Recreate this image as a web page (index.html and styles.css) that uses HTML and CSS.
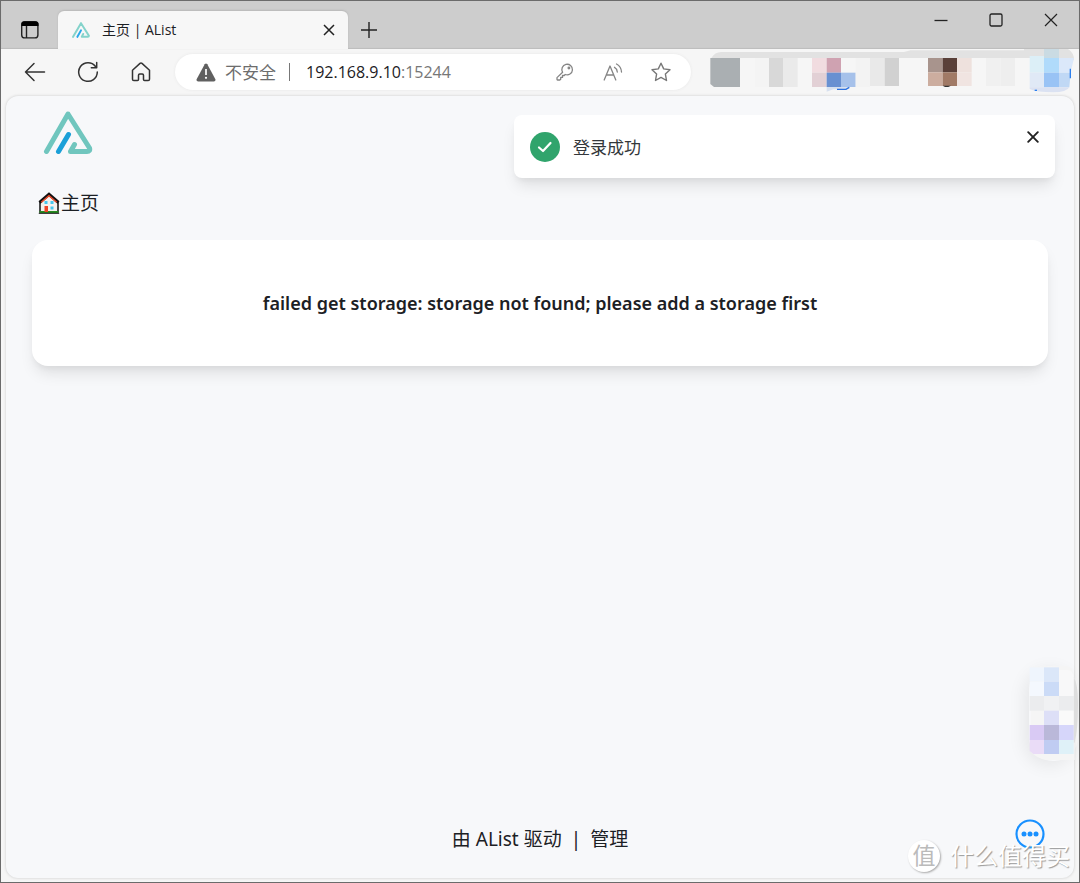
FILE: index.html
```html
<!DOCTYPE html>
<html lang="zh-CN">
<head>
<meta charset="utf-8">
<meta name="viewport" content="width=device-width, initial-scale=1">
<title>主页 | AList</title>
<link rel="stylesheet" href="styles.css">
</head>
<body class="window">
<header class="titlebar">
  <button class="icon-button tab-actions" type="button" aria-label="标签操作菜单">
    <svg width="20" height="20" viewBox="0 0 20 20" fill="none" stroke="#222" stroke-width="1.4"><rect x="1.7" y="1.7" width="16.2" height="16.2" rx="3"/><path d="M1.5 6V4Q1.5 1.5 4 1.5H16Q18.500 1.500 18.500 4V6Z" fill="#000" stroke="none"/><path d="M6.500 6V18"/></svg>
  </button>
  <div class="tab">
    <svg class="favicon" viewBox="0 0 50 44" fill="none" stroke-linecap="round" stroke-linejoin="round" stroke-width="5.500"><path d="M3 41L25 3L47 38Q47 41 44 41H27L31 33" stroke="#84d3cb"/><path d="M15 41L25 23" stroke="#2ba9ea"/></svg>
    <span class="tab-title">主页 | AList</span>
    <button class="icon-button tab-close" type="button" aria-label="关闭标签页">
      <svg width="12" height="12" viewBox="0 0 12 12" stroke="#222" stroke-width="1.500"><path d="M1 1L11 11M11 1L1 11"/></svg>
    </button>
  </div>
  <button class="icon-button new-tab" type="button" aria-label="新建标签页">
    <svg width="18" height="18" viewBox="0 0 18 18" stroke="#222" stroke-width="1.400"><path d="M9 1V17M1 9H17"/></svg>
  </button>
  <div class="window-controls">
    <button class="icon-button" type="button" aria-label="最小化"><svg width="14" height="14" viewBox="0 0 14 14" stroke="#222" stroke-width="1.300"><path d="M0.500 7.500H13.500"/></svg></button>
    <button class="icon-button" type="button" aria-label="最大化"><svg width="14" height="14" viewBox="0 0 14 14" fill="none" stroke="#222" stroke-width="1.300"><rect x="1" y="1" width="12" height="12" rx="1.500"/></svg></button>
    <button class="icon-button" type="button" aria-label="关闭"><svg width="14" height="14" viewBox="0 0 14 14" stroke="#222" stroke-width="1.200"><path d="M1 1L13 13M13 1L1 13"/></svg></button>
  </div>
</header>

<nav class="toolbar">
  <div class="nav-buttons">
    <button class="icon-button" type="button" aria-label="返回"><svg width="22" height="20" viewBox="0 0 22 20" fill="none" stroke="#333" stroke-width="1.500" stroke-linecap="round" stroke-linejoin="round"><path d="M20.500 10H1.500M10 1.500L1.500 10L10 18.500"/></svg></button>
    <button class="icon-button" type="button" aria-label="刷新"><svg width="22" height="22" viewBox="0 0 22 22" fill="none" stroke="#333" stroke-width="1.500" stroke-linecap="round" stroke-linejoin="round"><path d="M20.300 11A9.300 9.300 0 1 1 18.500 5.500M19.700 1.500V6.800H14.300"/></svg></button>
    <button class="icon-button" type="button" aria-label="主页"><svg width="20" height="20" viewBox="0 0 20 20" fill="none" stroke="#333" stroke-width="1.500" stroke-linejoin="round"><path d="M1.500 8.200L9 1.400Q10 0.600 11 1.400L18.500 8.200V17.300Q18.500 18.600 17.200 18.600H13.500Q12.500 18.600 12.500 17.600V13.200Q12.500 12 11.300 12H8.700Q7.500 12 7.500 13.200V17.600Q7.500 18.600 6.500 18.600H2.800Q1.500 18.600 1.500 17.300Z"/></svg></button>
  </div>
  <div class="address">
    <svg width="20" height="19" viewBox="0 0 20 19"><path d="M8.700 1.200Q10 -0.300 11.300 1.200L19.400 16.200Q20 18.500 17.800 18.500H2.200Q0 18.500 0.600 16.200Z" fill="#606060"/><path d="M10 6V12" stroke="#fff" stroke-width="1.700"/><circle cx="10" cy="14.800" r="1.100" fill="#fff"/></svg>
    <span class="security">不安全</span>
    <span class="address-divider"></span>
    <span class="url" role="textbox" aria-label="地址栏" tabindex="0">192.168.9.10<span class="port">:15244</span></span>
    <div class="address-actions">
      <button class="icon-button" type="button" aria-label="密码"><svg width="18" height="18" viewBox="0 0 18 18" fill="none" stroke="#858585" stroke-width="1.300" stroke-linejoin="round"><path d="M6.600 9.300A5.300 5.300 0 1 1 9.200 11.500L8.200 12.500H6.500V14.400H4.700V16.200L3.800 17H1.500Q1 17 1 16.500V14.600Z"/><circle cx="12.900" cy="5" r="0.800" fill="#858585"/></svg></button>
      <button class="icon-button" type="button" aria-label="大声朗读"><svg width="20" height="18" viewBox="0 0 20 18" fill="none" stroke="#858585" stroke-width="1.300" stroke-linecap="round" stroke-linejoin="round"><path d="M1.200 17L7 3L12.800 17M3.200 12H10.800M11.500 4.300Q14 5.600 14.300 9M13.500 1Q18.200 3.500 18.500 9"/></svg></button>
      <button class="icon-button" type="button" aria-label="收藏"><svg width="20" height="20" viewBox="0 0 20 20" fill="none" stroke="#777" stroke-width="1.400" stroke-linejoin="round"><path d="M10 1.200L12.700 6.900L19 7.700L14.400 12.100L15.500 18.500L10 15.400L4.500 18.500L5.600 12.100L1 7.700L7.300 6.900Z"/></svg></button>
    </div>
  </div>
  <svg class="extensions" viewBox="30 147 1092 138" aria-hidden="true">
    <path d="M34 174Q44 156 64 156H612L632 151H972V147H1104Q1122 158 1122 180L1112 184L1100 174Z" fill="#e2e2e2"/>
    <path d="M31 174H120V261H42L31 252Z" fill="#aaafb2"/>
    <path d="M164 174H207V261H164Z" fill="#f4f4f4"/><path d="M207 174H249V261H207Z" fill="#d8d8d8"/><path d="M249 174H293V261H249Z" fill="#eaeaea"/>
    <path d="M336 174H380V218H336Z" fill="#f1dce0"/><path d="M380 174H423V218H380Z" fill="#cfa2b1"/><path d="M336 218H380V261H336Z" fill="#e2d0d5"/><path d="M380 218H423V261H380Z" fill="#6990d1"/><path d="M423 218H467V261H423Z" fill="#a6c1ea"/><path d="M380 261H450L440 267L400 268L380 275Z" fill="#d7e0ef"/><path d="M411 268H438L448 262" fill="none" stroke="#2d72e0" stroke-width="4"/>
    <path d="M467 174H510V261H467Z" fill="#f3f3f3"/><path d="M510 174H554V258H510Z" fill="#e9e9e9"/><path d="M554 174H597V258H554Z" fill="#d1d1d1"/>
    <path d="M684 174H728V217H684Z" fill="#a8948d"/><path d="M728 174H771V217H728Z" fill="#5a4039"/><path d="M684 217H728V258H684Z" fill="#ccad9f"/><path d="M728 217H771V258H728Z" fill="#a17a66"/><path d="M728 257H753L745 261H735Z" fill="#333"/><path d="M771 174H815V217H771Z" fill="#eee1dd"/><path d="M771 217H815V258H771Z" fill="#f0e4e1"/>
    <path d="M858 174H902V258H858Z" fill="#f0f0f0"/><path d="M902 174H945V258H902Z" fill="#eee"/>
    <path d="M989 168H1032V218H989Z" fill="#dceff7"/><path d="M1032 147H1077V174H1032Z" fill="#cadbe3"/><path d="M1032 174H1077V218H1032Z" fill="#b0dbfb"/><path d="M1077 174H1122L1112 218H1077Z" fill="#dbe8fa"/><path d="M989 218H1032V262H989Z" fill="#e0e9f6"/><path d="M1032 218H1077V262H1032Z" fill="#99c3f5"/><path d="M1077 218H1112L1108 262H1077Z" fill="#c0d8f5"/><path d="M989 262H1108Q1100 277 1060 277Q1010 277 989 267Z" fill="#dbe2f2"/><path d="M1111 206V235" stroke="#2d80ee" stroke-width="4"/><path d="M1004 271H1011" stroke="#2d80ee" stroke-width="4"/>
  </svg>
</nav>

<div class="page">
  <header class="site-header">
    <a class="logo" href="#" aria-label="AList">
      <svg width="50" height="44" viewBox="0 0 50 44" fill="none" stroke-linecap="round" stroke-linejoin="round" stroke-width="5"><path d="M3.500 40.500L25 3L46.500 37Q47.500 40.500 44 40.500H27.500L31.500 33.500" stroke="#70c6be"/><path d="M15.500 40.500L25.500 23.500" stroke="#1ba0d8"/></svg>
    </a>
  </header>
  <nav class="breadcrumb">
    <a class="crumb" href="#">
      <svg width="22" height="22" viewBox="0 0 22 22"><path d="M2 10L11 2.500L20 10V20H2Z" fill="#f4f1ee" stroke="#111" stroke-width="1.500"/><path d="M1.500 19H20.500V21H1.500Z" fill="#278c20"/><path d="M0.800 21.300H21.200" stroke="#111"/><path d="M1.500 10.500L11 2.300L20.500 10.500" fill="none" stroke="#111" stroke-width="3"/><path d="M3.300 10.200L11 3.700L18.700 10.200" fill="none" stroke="#ee4b2b" stroke-width="1.400"/><path d="M6.500 14H10V20H6.500Z" fill="#ee4328"/><path d="M6.500 9H9.500V12H6.500ZM12.500 9H15.500V12H12.500ZM12.500 14.500H15.500V17.500H12.500Z" fill="#47c7ef"/></svg>
      <span>主页</span>
    </a>
  </nav>
  <main class="card">
    <h1 class="message">failed get storage: storage not found; please add a storage first</h1>
  </main>
  <footer class="footer">
    <a class="footer-link" href="#">由 AList 驱动</a>
    <span>|</span>
    <a class="footer-link" href="#">管理</a>
  </footer>

  <div class="toast" role="status">
    <svg width="30" height="30" viewBox="0 0 30 30"><circle cx="15" cy="15" r="15" fill="#30a46c"/><path d="M9 15.500L13 19L20.500 11" fill="none" stroke="#fff" stroke-width="2.200" stroke-linecap="round" stroke-linejoin="round"/></svg>
    <span class="toast-text">登录成功</span>
    <button class="icon-button toast-close" type="button" aria-label="关闭通知"><svg width="12" height="12" viewBox="0 0 12 12" stroke="#222" stroke-width="1.900" stroke-linecap="round"><path d="M1.200 1.200L10.800 10.800M10.800 1.200L1.200 10.800"/></svg></button>
  </div>

  <div class="side-panel" aria-hidden="true">
    <svg width="49" height="95" viewBox="447 78 147 285"><path d="M537 78Q580 70 581 110Q594 130 594 190Q594 270 584 308V360H500Q470 355 452 335V80Z" fill="#f5f5f5"/><path d="M581 110Q594 130 594 190Q594 270 584 308H581Z" fill="#dedede"/><path d="M449 82H492V125H449Z" fill="#eff5fd"/><path d="M492 82H537V125H492Z" fill="#dbe7f9"/><path d="M449 125H492V168H449Z" fill="#f4f8fe"/><path d="M492 125H537V168H492Z" fill="#cbdbf7"/><path d="M537 90H565Q581 94 581 115V168H537Z" fill="#f8f8f9"/><path d="M449 168H492V212H449Z" fill="#ebecee"/><path d="M492 168H537V212H492Z" fill="#f0f1f3"/><path d="M537 168H581V212H537Z" fill="#ebecee"/><path d="M492 212H537V255H492Z" fill="#dddff7"/><path d="M537 212H581V255H537Z" fill="#fafafa"/><path d="M449 255H492V300H449Z" fill="#d9caf4"/><path d="M492 255H537V300H492Z" fill="#bab8d9"/><path d="M537 255H581V300H537Z" fill="#d6d6fa"/><path d="M449 300H492V342H460L449 333Z" fill="#eadcf7"/><path d="M492 300H537V342H492Z" fill="#c0ccf2"/><path d="M537 300H581V342H537Z" fill="#dff1f8"/></svg>
  </div>

  <button class="icon-button more" type="button" aria-label="更多">
    <svg width="30" height="30" viewBox="0 0 30 30" fill="#1890ff"><circle cx="15" cy="15" r="13.500" fill="none" stroke="#1890ff" stroke-width="2.200"/><circle cx="9" cy="15" r="2.500"/><circle cx="15" cy="15" r="2.500"/><circle cx="21" cy="15" r="2.500"/></svg>
  </button>

  <div class="watermark">
    <span class="watermark-badge">值</span>
    <span class="watermark-text">什么值得买</span>
  </div>
</div>
</body>
</html>
```

FILE: styles.css
```css
* {
  box-sizing: border-box;
}

.window {
  display: flex;
  flex-direction: column;
  min-height: 100vh;
  margin: 0;
  border: 1px solid #6b6b6b;
  background: #f6f6f6;
  color: #1c2024;
  font-family: "Noto Sans", "Noto Sans CJK SC", sans-serif;
}

.icon-button {
  display: flex;
  align-items: center;
  justify-content: center;
  padding: 0;
  border: 0;
  background: none;
  color: inherit;
  font: inherit;
}

a {
  color: inherit;
  text-decoration: none;
}

.titlebar {
  display: flex;
  align-items: flex-end;
  height: 48px;
  background: #cdcdcd;
  box-shadow: inset 0 -1px 1px #bdbdbd;
}

.tab-actions {
  width: 57px;
  height: 38px;
}

.tab {
  display: flex;
  align-items: center;
  width: 290px;
  height: 38px;
  padding: 0 6px 0 14px;
  border-radius: 6px 6px 0 0;
  background: #f7f7f7;
  box-shadow: 0 -1px 2px #b8b8b8;
}

.favicon {
  width: 18px;
  height: 18px;
}

.tab-title {
  flex: 1;
  margin-left: 12px;
  padding-bottom: 2px;
  font-family: "Open Sans", "Noto Sans CJK SC", sans-serif;
  font-size: 14px;
}

.tab-close {
  width: 26px;
  height: 26px;
}

.new-tab {
  width: 42px;
  height: 38px;
}

.window-controls {
  display: flex;
  align-self: flex-start;
  margin-left: auto;
  padding-right: 1px;
}

.window-controls .icon-button {
  width: 55px;
  height: 38px;
}

.toolbar {
  display: flex;
  align-items: center;
  height: 46px;
  padding: 0 5px 0 7px;
}

.nav-buttons {
  display: flex;
}

.nav-buttons .icon-button {
  width: 53px;
  height: 36px;
}

.address {
  display: flex;
  flex: 1;
  align-items: center;
  height: 36px;
  margin-left: 8px;
  padding: 0 6px 0 21px;
  border-radius: 18px;
  background: #fff;
  box-shadow: 0 0 3px #e6e6e6;
  font-size: 17px;
}

.security {
  margin-left: 9px;
  padding-bottom: 2px;
  color: #6d6d6d;
}

.address-divider {
  width: 1px;
  height: 18px;
  margin: 0 16px 0 13px;
  background: #777;
}

.url {
  font-family: "Open Sans", sans-serif;
  font-size: 16px;
}

.port {
  color: #777;
}

.address-actions {
  display: flex;
  margin-left: auto;
}

.address-actions .icon-button {
  width: 48px;
  height: 36px;
}

.extensions {
  width: 364px;
  height: 46px;
  margin-left: 19px;
}

.page {
  position: relative;
  display: flex;
  flex: 1;
  flex-direction: column;
  margin: 1px 5px 4px;
  border-radius: 12px;
  background: #f7f8fa;
  box-shadow: 0 0 3px #c8c8c8;
}

.site-header {
  padding: 15px 37px 0;
}

.logo {
  display: flex;
}

.breadcrumb {
  padding: 34px 32px 0;
}

.crumb {
  display: flex;
  align-items: center;
  gap: 1px;
  font-size: 19px;
  line-height: 28px;
}

.card {
  display: flex;
  align-items: center;
  justify-content: center;
  min-height: 126px;
  margin: 23px 26px 0;
  padding: 16px;
  border-radius: 16px;
  background: #fff;
  box-shadow: 0 10px 15px -3px rgba(0, 0, 0, 0.1), 0 4px 6px -2px rgba(0, 0, 0, 0.05);
}

.message {
  margin: 0;
  font-size: 18px;
  font-weight: 600;
  line-height: 28px;
}

.footer {
  display: flex;
  justify-content: center;
  gap: 9px;
  margin-top: auto;
  padding-bottom: 25px;
  font-size: 19px;
  line-height: 28px;
}

.toast {
  position: absolute;
  top: 19px;
  right: 19px;
  display: flex;
  align-items: center;
  width: 541px;
  height: 63px;
  padding: 0 16px;
  border-radius: 8px;
  background: #fff;
  box-shadow: 0 10px 15px -3px rgba(0, 0, 0, 0.1), 0 4px 6px -2px rgba(0, 0, 0, 0.05);
}

.toast-text {
  margin-left: 13px;
  color: #33373b;
  font-size: 17px;
}

.toast-close {
  align-self: flex-start;
  margin: 16px 0 0 auto;
}

.side-panel {
  position: absolute;
  right: -4px;
  bottom: 117px;
  display: flex;
  border-radius: 24px;
  box-shadow: -4px 4px 18px rgba(0, 0, 0, 0.08);
}

.more {
  position: absolute;
  right: 29px;
  bottom: 29px;
}

.watermark {
  position: absolute;
  right: 4px;
  bottom: 6px;
  display: flex;
  align-items: center;
  gap: 10px;
  color: #fff;
  text-shadow: 1px 1px 1px #999;
}

.watermark-badge {
  width: 32px;
  height: 32px;
  border-radius: 50%;
  background: #fff;
  box-shadow: 1px 1px 2px #aaa;
  color: #bbb;
  font-size: 23px;
  line-height: 30px;
  text-align: center;
  text-shadow: none;
}

.watermark-text {
  font-size: 24px;
  line-height: 32px;
}
```
